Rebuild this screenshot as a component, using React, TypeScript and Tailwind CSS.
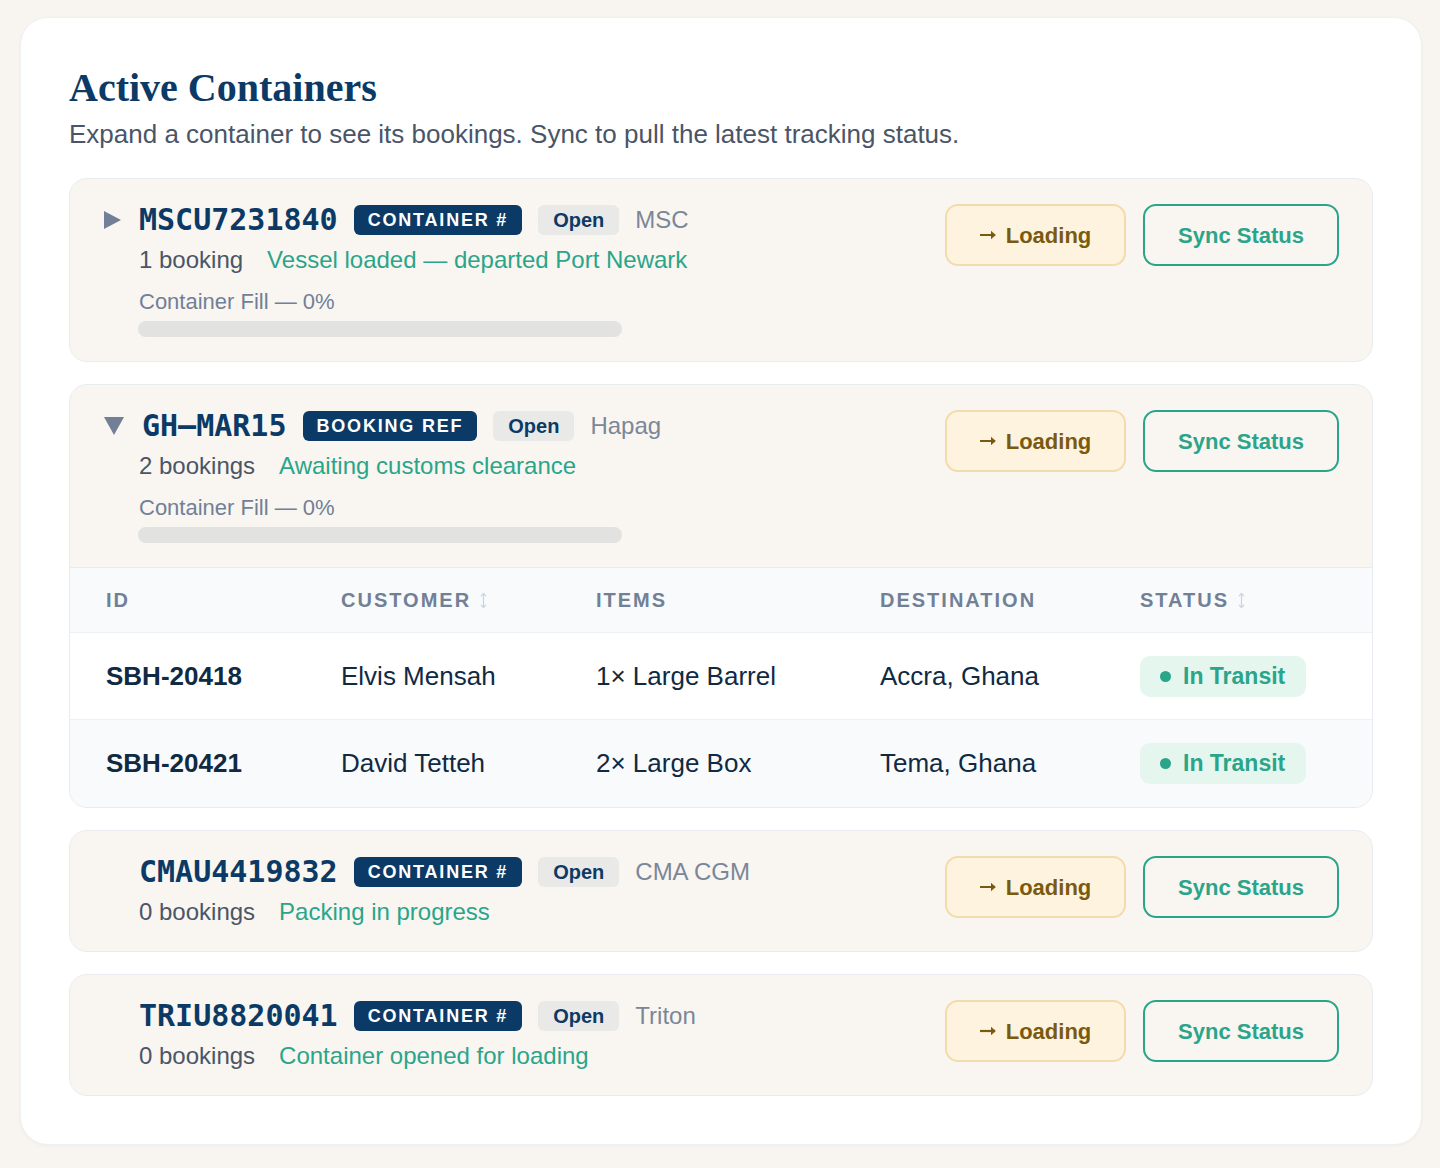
import React from "react";

type Container = {
  id: string;
  kind: string;
  carrier: string;
  bookings: string;
  status: string;
  fill?: boolean;
  caret?: "right" | "down" | "none";
  rows?: { id: string; customer: string; items: string; dest: string; status: string }[];
};

const data: Container[] = [
  {
    id: "MSCU7231840",
    kind: "CONTAINER #",
    carrier: "MSC",
    bookings: "1 booking",
    status: "Vessel loaded — departed Port Newark",
    fill: true,
    caret: "right",
  },
  {
    id: "GH–MAR15",
    kind: "BOOKING REF",
    carrier: "Hapag",
    bookings: "2 bookings",
    status: "Awaiting customs clearance",
    fill: true,
    caret: "down",
    rows: [
      { id: "SBH-20418", customer: "Elvis Mensah", items: "1× Large Barrel", dest: "Accra, Ghana", status: "In Transit" },
      { id: "SBH-20421", customer: "David Tetteh", items: "2× Large Box", dest: "Tema, Ghana", status: "In Transit" },
    ],
  },
  {
    id: "CMAU4419832",
    kind: "CONTAINER #",
    carrier: "CMA CGM",
    bookings: "0 bookings",
    status: "Packing in progress",
    caret: "none",
  },
  {
    id: "TRIU8820041",
    kind: "CONTAINER #",
    carrier: "Triton",
    bookings: "0 bookings",
    status: "Container opened for loading",
    caret: "none",
  },
];

function SortIcon() {
  return (
    <svg width="9" height="17" viewBox="0 0 9 17" fill="none" stroke="#cbd5e1" strokeWidth="1.2" strokeLinecap="round" strokeLinejoin="round">
      <path d="M4.5 1.5 V15.5" />
      <path d="M2.2 3.8 L4.5 1.5 L6.8 3.8" />
      <path d="M2.2 13.2 L4.5 15.5 L6.8 13.2" />
    </svg>
  );
}

function Arrow() {
  return (
    <svg width="17" height="12" viewBox="0 0 17 12" fill="none" stroke="#7a5a0f" strokeWidth="2.2" strokeLinecap="butt" strokeLinejoin="miter">
      <path d="M0 6 H15" />
      <path d="M11 2 L15.5 6 L11 10" fill="#7a5a0f" strokeWidth="0.5" />
    </svg>
  );
}

function Caret({ kind }: { kind: "right" | "down" | "none" }) {
  if (kind === "right")
    return (
      <svg width="17" height="18" viewBox="0 0 17 18">
        <path d="M0 0 L17 9 L0 18 Z" fill="#718096" />
      </svg>
    );
  if (kind === "down")
    return (
      <svg width="20" height="18" viewBox="0 0 20 18">
        <path d="M0 0 H20 L10 18 Z" fill="#718096" />
      </svg>
    );
  return null;
}

function Panel({ c }: { c: Container }) {
  return (
    <div className="rounded-[18px] border border-[#e8ecf0] bg-[#f9f6f1] overflow-hidden">
      <div className="flex items-start justify-between pl-[34px] pr-[33px] pt-6 pb-6">
        <div className="flex">
          <div className="w-[35px] h-[34px] flex items-center shrink-0">
            <Caret kind={c.caret ?? "none"} />
          </div>
          <div className="flex flex-col">
            <div className={`flex items-center gap-4 h-[34px] ${c.caret === "down" ? "ml-[3px]" : ""}`}>
              <span className="font-['DejaVu_Sans_Mono',monospace] font-bold text-[30px] leading-[34px] text-[#0b3a66]">
                {c.id}
              </span>
              <span className="h-[30px] px-[14px] flex items-center rounded-[6px] bg-[#0b3a66] text-white font-bold text-[18px] tracking-[0.1em]">
                {c.kind}
              </span>
              <span className="h-[30px] px-[15px] flex items-center rounded-[6px] bg-[#e9e9e7] text-[#0b3a66] font-bold text-[20px]">
                Open
              </span>
              <span className="text-[24px] text-[#7b8798]">{c.carrier}</span>
            </div>
            <div className="flex items-center gap-6 mt-[8px] h-[30px] text-[24px]">
              <span className="text-[#4a5568]">{c.bookings}</span>
              <span className="text-[#2aa58a]">{c.status}</span>
            </div>
            {c.fill && (
              <>
                <div className="mt-[13px] h-[28px] leading-[28px] text-[22px] text-[#718096]">Container Fill — 0%</div>
                <div className="mt-[5px] -ml-px h-[16px] w-[484px] rounded-full bg-[#e2e3e1]" />
              </>
            )}
          </div>
        </div>
        <div className="flex items-center gap-[17px] pt-px">
          <button className="h-[62px] w-[181px] flex items-center justify-center gap-[9px] rounded-[13px] border-2 border-[#f3dcab] bg-[#fef3de] text-[#7a5a0f] font-bold text-[22px]">
            <Arrow />
            <span>Loading</span>
          </button>
          <button className="h-[62px] w-[196px] flex items-center justify-center rounded-[13px] border-2 border-[#2aa58a] text-[#2aa58a] font-bold text-[22px]">
            Sync Status
          </button>
        </div>
      </div>
      {c.rows && (
        <div className="border-t border-[#e8ecf0]">
          <div className="grid grid-cols-[235px_255px_284px_260px_1fr] h-[65px] bg-[#f8fafc] border-b border-[#eceff3] text-[20px] font-bold tracking-[0.1em] text-[#718096]">
            <div className="pl-9 flex items-center">ID</div>
            <div className="pl-9 flex items-center gap-[8px]">CUSTOMER <SortIcon /></div>
            <div className="pl-9 flex items-center">ITEMS</div>
            <div className="pl-9 flex items-center">DESTINATION</div>
            <div className="pl-9 flex items-center gap-[8px]">STATUS <SortIcon /></div>
          </div>
          {c.rows.map((r, i) => (
            <div
              key={r.id}
              className={`grid grid-cols-[235px_255px_284px_260px_1fr] text-[26px] text-[#102a43] ${
                i === 0 ? "h-[87px] bg-white border-b border-[#eef1f4]" : "h-[87px] bg-[#f8fafc]"
              }`}
            >
              <div className="pl-9 flex items-center font-bold">{r.id}</div>
              <div className="pl-9 flex items-center">{r.customer}</div>
              <div className="pl-9 flex items-center">{r.items}</div>
              <div className="pl-9 flex items-center">{r.dest}</div>
              <div className="pl-9 flex items-center">
                <span className="h-[41px] pl-5 pr-[21px] flex items-center gap-3 rounded-[10px] bg-[#e5f6ef] text-[#2aa58a] font-bold text-[23px]">
                  <span className="w-[11px] h-[11px] rounded-full bg-[#2aa58a]" />
                  {r.status}
                </span>
              </div>
            </div>
          ))}
        </div>
      )}
    </div>
  );
}

export default function App() {
  return (
    <div className="min-h-[1168px] bg-[#f8f5f0] pt-[17px] pb-6 font-['Liberation_Sans',Arial,sans-serif]">
      <div className="ml-5 w-[1402px] rounded-[28px] border border-[#edf0f4] bg-white p-12 shadow-[0_1px_3px_rgba(15,23,42,0.04)]">
        <h1 className="font-['Liberation_Serif',serif] font-bold text-[40px] leading-[44px] text-[#0b3a66]">
          Active Containers
        </h1>
        <p className="mt-[6px] text-[26px] leading-[36px] text-[#4a5568]">
          Expand a container to see its bookings. Sync to pull the latest tracking status.
        </p>
        <div className="mt-[26px] flex flex-col gap-[22px]">
          {data.map((c) => (
            <Panel key={c.id} c={c} />
          ))}
        </div>
      </div>
    </div>
  );
}
